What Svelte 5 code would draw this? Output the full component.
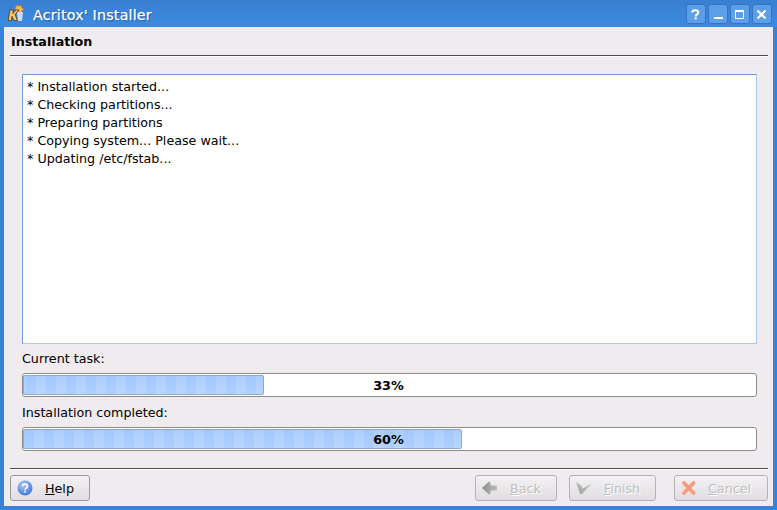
<script>
  const log = ['* Installation started...', '* Checking partitions...', '* Preparing partitions', '* Copying system... Please wait...', '* Updating /etc/fstab...'];
  const bars = [
    { label: 'Current task:', pct: 33, width: 241, offset: 2, cls: '' },
    { label: 'Installation completed:', pct: 60, width: 439, offset: 0, cls: 'low' }
  ];
</script>

<div class="win">
  <header class="title">
    <svg class="logo" width="18" height="18" viewBox="0 0 18 18">
      <path d="M8 4l2-3 2 1 2-1 1 3 2 1-2 2-1 2-2-1-2 0z" fill="#f4b84e" stroke="#a8661a" stroke-width=".5"/>
      <path d="M10.500 8.500h5l-.8 8h-3.400z" fill="#c9dcf4" stroke="#eef4fc" stroke-width=".6"/>
      <path d="M3 6h3.400l-.6 3.600L9 6h3L8 10.500 10.500 16.500H7L5 12.300l-.6 4.200H1.200z" fill="#f8cc60" stroke="#5c3408" stroke-width=".8"/>
    </svg>
    <span class="title-text">Acritox' Installer</span>
    <div class="wbtns">
      <span class="wb"><svg width="20" height="20" viewBox="0 0 20 20"><path d="M6.200 8.500c0-3 6-3 6 0 0 2-2.500 1.800-2.500 4" fill="none" stroke="#fff" stroke-width="2"/><rect x="8.700" y="13.300" width="2" height="2" fill="#fff"/></svg></span>
      <span class="wb"><svg width="20" height="20" viewBox="0 0 20 20"><rect x="6" y="13" width="9" height="2" fill="#fff"/></svg></span>
      <span class="wb"><svg width="20" height="20" viewBox="0 0 20 20"><rect x="5.500" y="6.500" width="8" height="8" fill="none" stroke="#fff" stroke-width="1"/><rect x="5" y="6" width="9" height="2" fill="#fff"/></svg></span>
      <span class="wb"><svg width="20" height="20" viewBox="0 0 20 20"><path d="M5.500 6.500l8 8M13.500 6.500l-8 8" stroke="#fff" stroke-width="2.200"/></svg></span>
    </div>
  </header>

  <main class="body">
    <h1>Installation</h1>
    <div class="sep"></div>
    <div class="log">
      {#each log as line}<div>{line}</div>{/each}
    </div>
    {#each bars as b}
      <div class="label {b.cls}">{b.label}</div>
      <div class="bar">
        <div class="fill" style="width: {b.width}px; background-position: 0 0, {b.offset}px 0"></div>
        <span class="pct">{b.pct}%</span>
      </div>
    {/each}
    <div class="sep sep2"></div>
    <footer>
      <button class="btn help">
        <svg width="16" height="16" viewBox="0 0 16 16">
          <defs><radialGradient id="hg" cx=".4" cy=".3" r=".8"><stop offset="0" stop-color="#a9c8fb"/><stop offset="1" stop-color="#2f6fe0"/></radialGradient></defs>
          <circle cx="8" cy="8" r="7.500" fill="url(#hg)"/>
          <path d="M5.500 6.300c0-3 5-3 5 0 0 1.800-2.500 1.800-2.500 3.500" fill="none" stroke="#fff" stroke-width="1.700"/>
          <rect x="7.100" y="10.800" width="1.800" height="1.800" fill="#fff"/>
        </svg>
        <span class="cap"><u>H</u>elp</span>
      </button>
      <div class="spacer"></div>
      <button class="btn off back">
        <svg width="16" height="16" viewBox="0 0 16 16">
          <defs><linearGradient id="ag" x1="0" x2="1" y1="0" y2="0"><stop offset="0" stop-color="#8e8e8e"/><stop offset="1" stop-color="#bcbcbc"/></linearGradient></defs>
          <path d="M0 8l7-6.500 1.500 1v3H15v5H8.500v3l-1.500 1z" fill="url(#ag)"/>
        </svg>
        <span class="cap"><u>B</u>ack</span>
      </button>
      <button class="btn off finish">
        <svg width="18" height="16" viewBox="0 0 18 16">
          <defs><linearGradient id="cg" x1="0" x2="1" y1="1" y2="0"><stop offset="0" stop-color="#a0a0a0"/><stop offset="1" stop-color="#c8c8c8"/></linearGradient></defs>
          <path d="M1 2l5 3.500 2 3L17 3 7 14H5z" fill="url(#cg)"/>
        </svg>
        <span class="cap"><u>F</u>inish</span>
      </button>
      <button class="btn off cancel">
        <svg width="16" height="16" viewBox="0 0 16 16"><path d="M3 3l9.500 10M12.500 3L3 13" stroke="#f69a80" stroke-width="3.800" stroke-linecap="round"/></svg>
        <span class="cap"><u>C</u>ancel</span>
      </button>
    </footer>
  </main>
</div>

<style>
  :global(body) { margin: 0; }
  .win {
    width: 777px; height: 510px; box-sizing: border-box;
    display: flex; flex-direction: column;
    background: #3783d8;
    padding: 0 4px 4px;
    font: 12.7px "DejaVu Sans", sans-serif;
    color: #000;
    overflow: hidden;
  }
  .title {
    height: 27px; flex: none; display: flex; align-items: center;
    margin: 0 -4px; padding: 0 4px;
    background: linear-gradient(#3a7fd0, #3b8be4);
    color: #fff;
  }
  .logo { margin-left: 3px; margin-top: -1px; }
  .title-text {
    margin-left: 8px; margin-top: 2px; font-size: 14.2px; font-weight: 500; letter-spacing: .22px;
    text-shadow: 1px 1px 1px #1d4f8c;
    -webkit-text-stroke: .25px #fff;
  }
  .wbtns { margin-left: auto; display: flex; gap: 2px; margin-right: 1px; margin-top: 1px; }
  .wb {
    width: 20px; height: 20px; box-sizing: border-box;
    border: 1px solid #3474c2; border-radius: 3px;
    background: #5c9fe6;
    display: flex; align-items: center; justify-content: center;
  }
  .wb svg { margin: -1px; flex: none; }
  .body {
    flex: 1; background: #efebef; padding: 0 5px 5px 6px;
    display: flex; flex-direction: column; min-height: 0;
  }
  h1 { margin: 7px 0 -1px 1px; font-size: 12.7px; line-height: 16px; font-weight: 700; height: 16px; }
  .sep { height: 1px; background: #4a4a4a; box-shadow: 0 1px 0 #fff; margin-top: 6px; flex: none; }
  .log {
    margin: 18px 11px 0 12px; height: 270px; box-sizing: border-box; flex: none;
    background: #fff; border: 1px solid #a8c8f0; border-top-color: #6f9fd8; border-left-color: #6f9fd8;
    padding: 3px 4px; line-height: 18px;
  }
  .label { margin: 6px 0 0 12px; line-height: 18px; height: 17px; }
  .label.low { margin-top: 7px; line-height: 17px; }
  .bar {
    position: relative; margin: 6px 11px 0 12px; height: 24px; box-sizing: border-box; flex: none;
    border: 1px solid #8c8c8c; border-radius: 3px; background: #fff; padding: 1px 0;
  }
  .fill {
    height: 100%; box-sizing: border-box; border: 1px solid #8fa9cc; border-radius: 2px;
    background:
      linear-gradient(rgba(90,140,230,.08), rgba(255,255,255,.08)),
      linear-gradient(90deg, #a8ccff 0 10px, #b3d3ff 10px 20px);
    background-size: 100% 100%, 20px 100%;
  }
  .pct {
    position: absolute; inset: 0; text-align: center; line-height: 23px; font-weight: 700; font-size: 12.8px; left: -2px;
  }
  .sep2 { margin-top: 17px; }
  footer { display: flex; margin-top: 6px; }
  .btn {
    height: 26px; box-sizing: border-box; padding: 0; flex: none;
    border: 1px solid #9a9a9a; border-radius: 3px;
    background: linear-gradient(#f3f1f3, #e0dee0);
    font: 12.7px "DejaVu Sans", sans-serif; color: #000;
    display: flex; align-items: center;
  }
  .help { width: 80px; padding-left: 6px; }
  .help .cap { margin-left: 12px; }
  .spacer { flex: 1; }
  .off { color: #c0bec0; border-color: #b4b2b4; text-shadow: 1px 1px 0 #fff; }
  .back { width: 82px; padding-left: 6px; }
  .back .cap { margin-left: 12px; }
  .finish { width: 87px; margin-left: 12px; padding-left: 5px; }
  .finish .cap { margin-left: 11px; }
  .cancel { width: 94px; margin-left: 18px; padding-left: 6px; }
  .cancel .cap { margin-left: 11px; }
  svg { display: block; flex: none; }
</style>
